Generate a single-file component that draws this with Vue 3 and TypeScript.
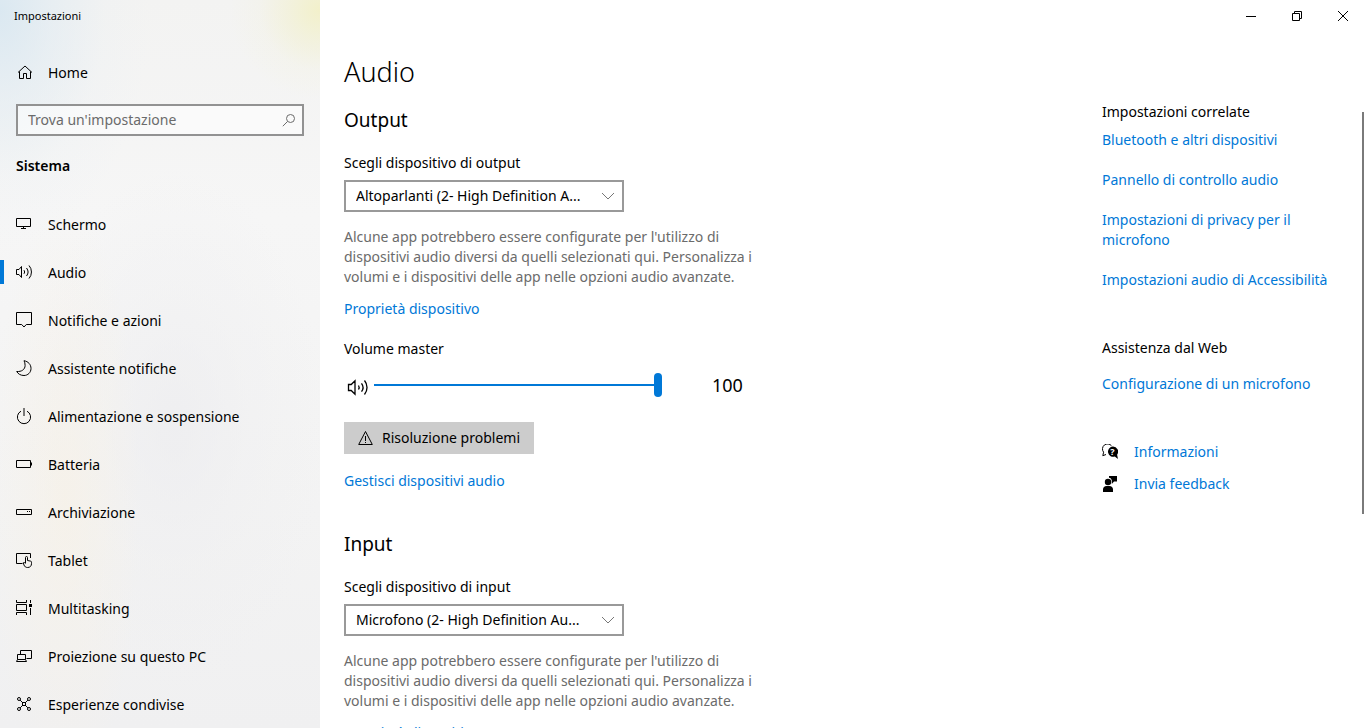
<script setup lang="ts">
import { ref } from 'vue'

interface NavItem {
  id: string
  label: string
  stroke: string
  fill?: string
}

interface DeviceSection {
  id: string
  title: string
  label: string
  device: string
}

const navItems: NavItem[] = [
  { id: 'schermo', label: 'Schermo', stroke: 'M.5 2.5h14v8H.5zM7.5 10.5v2M5 12.5h5' },
  {
    id: 'audio',
    label: 'Audio',
    stroke:
      'M.5 5.5H3l2.5-3v11l-2.5-3H.5zM8 6.2a3 3 0 0 1 0 3.6M10.5 4a6.4 6.4 0 0 1 0 8M13 1.5a9.8 9.8 0 0 1 0 13',
  },
  { id: 'notifiche', label: 'Notifiche e azioni', stroke: 'M.5.5h15v12H10.3L8 15l-2.3-2.500H.5z' },
  {
    id: 'assistente',
    label: 'Assistente notifiche',
    stroke:
      'M8 .7C12.400 1.500 15 4.600 15 8.500c0 4-3.200 7-7 7-3.300 0-5.900-1.500-7.300-4C5.500 11.900 9.100 9.500 9.100 5.500 9.100 3.500 8.700 2 8 .7z',
  },
  {
    id: 'alimentazione',
    label: 'Alimentazione e sospensione',
    stroke: 'M8 0v8M5 3.200a6.600 6.600 0 1 0 6 0',
  },
  { id: 'batteria', label: 'Batteria', stroke: 'M.5 4.500h14v7H.5zM15.500 6.500v3' },
  {
    id: 'archiviazione',
    label: 'Archiviazione',
    stroke: 'M.5 5.500h15v5H.5z',
    fill: 'M11 7h1v1h-1zM13 7h1v1h-1z',
  },
  {
    id: 'tablet',
    label: 'Tablet',
    stroke:
      'M6.500 11.500h-6v-10h14V6M9.500 11V5.500a1 1 0 0 1 2 0V8.500l3 .6c.7.1 1 .5 1 1.200v1.400c0 2.200-1.400 3.800-3.800 3.800-2 0-3.200-.9-3.700-2.500l-.8-2.200c.9-.5 1.800-.2 2.300.7',
  },
  {
    id: 'multitasking',
    label: 'Multitasking',
    stroke: 'M.5 0v2.500h10V0M.5 4.500h10v6H.5zM.5 15v-2.500h10V15M14.500 0v3M14.500 8v7',
    fill: 'M13 4h3v3h-3z',
  },
  {
    id: 'proiezione',
    label: 'Proiezione su questo PC',
    stroke: 'M4.500 6V2.500h11v8h-5M1.500 6.500h8v5h-8zM1.500 11.500l-1 2h10l-1-2',
  },
  {
    id: 'esperienze',
    label: 'Esperienze condivise',
    stroke:
      'M4.100 4.100l2.900 2.900M11.900 4.100L9 7M4.100 11.900L7 9M11.900 11.900L9 9M6.500 6.500h3v3h-3zM4.500 3a1.500 1.500 0 1 1-3 0 1.500 1.500 0 0 1 3 0zM14.500 3a1.500 1.500 0 1 1-3 0 1.500 1.500 0 0 1 3 0zM4.500 13a1.500 1.500 0 1 1-3 0 1.500 1.500 0 0 1 3 0zM14.500 13a1.500 1.500 0 1 1-3 0 1.500 1.500 0 0 1 3 0z',
  },
]

const outputSection: DeviceSection = {
  id: 'output',
  title: 'Output',
  label: 'Scegli dispositivo di output',
  device: 'Altoparlanti (2- High Definition A...',
}
const inputSection: DeviceSection = {
  id: 'input',
  title: 'Input',
  label: 'Scegli dispositivo di input',
  device: 'Microfono (2- High Definition Au...',
}
const sections = [outputSection, inputSection]

const relatedLinks = [
  'Bluetooth e altri dispositivi',
  'Pannello di controllo audio',
  'Impostazioni di privacy per il microfono',
  'Impostazioni audio di Accessibilità',
]

const active = ref('audio')
const search = ref('')
const volume = ref(100)
</script>

<template>
  <div class="window">
    <aside class="sidebar">
      <div class="app-title">Impostazioni</div>
      <a class="nav-link home" href="#home">
        <svg class="icon" viewBox="0 0 18 18" aria-hidden="true">
          <path class="line" d="M2 8.500 9 2l7 6.500M3.500 7.500v7h4v-5h3v5h4v-7" />
        </svg>
        <span>Home</span>
      </a>
      <div class="search">
        <input v-model="search" type="text" placeholder="Trova un'impostazione" aria-label="Trova un'impostazione" />
        <svg class="search-icon" viewBox="0 0 14 14" aria-hidden="true">
          <circle class="line" cx="8.500" cy="5.500" r="4" />
          <path class="line" d="M5.500 8.500.8 13.200" />
        </svg>
      </div>
      <h2 class="group">Sistema</h2>
      <nav>
        <a
          v-for="item in navItems"
          :key="item.id"
          class="nav-link"
          :class="{ active: item.id === active }"
          :href="'#' + item.id"
          @click.prevent="active = item.id"
        >
          <svg class="icon" viewBox="0 0 18 18" aria-hidden="true">
            <path class="line" :d="item.stroke" />
            <path v-if="item.fill" :d="item.fill" />
          </svg>
          <span>{{ item.label }}</span>
        </a>
      </nav>
    </aside>

    <main class="main">
      <div class="titlebar">
        <button type="button" aria-label="Riduci a icona">
          <svg viewBox="0 0 12 12"><path class="line" d="M1 6.500h10" /></svg>
        </button>
        <button type="button" aria-label="Ripristina">
          <svg viewBox="0 0 12 12"><path class="line" d="M1.500 3.500h7v7h-7zM3.500 3.500v-2h7v7h-2" /></svg>
        </button>
        <button type="button" aria-label="Chiudi">
          <svg viewBox="0 0 12 12"><path class="line" d="M1 1l10 10M11 1L1 11" /></svg>
        </button>
      </div>
      <h1>Audio</h1>
      <div class="body">
        <div class="settings">
          <section v-for="section in sections" :key="section.id" class="section">
            <h2>{{ section.title }}</h2>
            <label class="field-label" :for="'device-' + section.id">{{ section.label }}</label>
            <div class="select">
              <select :id="'device-' + section.id">
                <option>{{ section.device }}</option>
              </select>
              <svg viewBox="0 0 14 8" aria-hidden="true"><path class="line" d="M1 1l6 6 6-6" /></svg>
            </div>
            <p>
              Alcune app potrebbero essere configurate per l'utilizzo di dispositivi audio diversi da quelli
              selezionati qui. Personalizza i volumi e i dispositivi delle app nelle opzioni audio avanzate.
            </p>
            <a class="link" :href="'#proprieta-' + section.id">Proprietà dispositivo</a>
            <template v-if="section.id === 'output'">
              <label class="volume-label" for="volume">Volume master</label>
              <div class="volume">
                <svg class="speaker" viewBox="0 0 22 24" aria-hidden="true">
                  <path
                    class="line bold"
                    d="M1.500 11.500H4.200L8 7.700v13.600l-3.800-3.800H1.500zM11.500 12.500a3.600 3.600 0 0 1 0 4M14.500 10.300a7 7 0 0 1 0 8.400M17.500 7.500a11 11 0 0 1 0 14"
                  />
                </svg>
                <input id="volume" v-model.number="volume" type="range" min="0" max="100" />
                <output for="volume">{{ volume }}</output>
              </div>
              <button class="troubleshoot" type="button">
                <svg viewBox="0 0 16 16" aria-hidden="true">
                  <path class="line" d="M7.500 1.500 14.300 14.500H.7zM7.500 6v5M7.500 12v1" />
                </svg>
                <span>Risoluzione problemi</span>
              </button>
              <a class="link" href="#gestisci">Gestisci dispositivi audio</a>
            </template>
          </section>
        </div>

        <aside class="related">
          <h3>Impostazioni correlate</h3>
          <ul class="related-list">
            <li v-for="text in relatedLinks" :key="text"><a class="link" href="#correlate">{{ text }}</a></li>
          </ul>
          <h3 class="web">Assistenza dal Web</h3>
          <a class="link" href="#microfono">Configurazione di un microfono</a>
          <div class="help">
            <a class="link" href="#informazioni">
              <svg viewBox="0 0 16 16" aria-hidden="true">
                <path class="line" d="M9.500 1.800A4.700 4.700 0 0 0 1.600 8.200L.8 11.700 4 10.500" />
                <path
                  d="M10.500 2.500a5.200 5.200 0 1 0 2.300 10.100L16 15l-.9-4.200A5.200 5.200 0 0 0 10.500 2.500z"
                />
                <text x="10.500" y="11" text-anchor="middle">?</text>
              </svg>
              <span>Informazioni</span>
            </a>
            <a class="link" href="#feedback">
              <svg viewBox="0 0 16 16" aria-hidden="true">
                <circle cx="6" cy="6" r="3.200" />
                <path d="M1 16v-2.500C1 11.500 2.500 10 4.500 10h3c2 0 3.500 1.500 3.500 3.500V16zM7 0h8v5.500h-3L9.800 8V4.500C9.500 3 8.500 2 7 1.800z" />
              </svg>
              <span>Invia feedback</span>
            </a>
          </div>
        </aside>
        <div class="scroll-thumb" aria-hidden="true"></div>
      </div>
    </main>
  </div>
</template>

<style>
body {
  margin: 0;
  overflow: hidden;
}
</style>

<style scoped>
.window {
  display: grid;
  grid-template-columns: 320px 1fr;
  height: 100vh;
  overflow: hidden;
  background: #fff;
  color: #000;
  font-family: 'Noto Sans', 'Open Sans', sans-serif;
  font-size: 14px;
  line-height: 20px;
}

h1,
h2,
h3,
p,
ul {
  margin: 0;
  padding: 0;
  font-weight: 400;
}

h3 {
  font-size: 14px;
}

button,
input,
select {
  margin: 0;
  font: inherit;
  color: inherit;
}

a {
  color: inherit;
  text-decoration: none;
}

.line {
  fill: none;
  stroke: currentColor;
}

.bold {
  stroke-width: 1.3;
}

.sidebar {
  overflow: hidden;
  background:
    radial-gradient(circle at 320px 10px, rgba(242, 240, 198, 0.9) 0, rgba(242, 240, 206, 0.6) 30px, rgba(242, 240, 206, 0.15) 60px, rgba(242, 240, 206, 0) 90px),
    radial-gradient(ellipse 150px 240px at 0 10px, rgba(216, 231, 241, 0.9) 0, rgba(220, 233, 242, 0.5) 35%, rgba(224, 235, 243, 0.12) 70%, rgba(224, 235, 243, 0) 100%),
    radial-gradient(ellipse 75px 300px at 65px 500px, rgba(247, 241, 230, 0.7) 0, rgba(247, 241, 230, 0.4) 40%, rgba(247, 242, 232, 0) 100%),
    radial-gradient(ellipse 150px 260px at 175px 430px, rgba(236, 236, 239, 0.7) 0, rgba(238, 238, 240, 0.35) 50%, rgba(238, 238, 240, 0) 100%),
    linear-gradient(#f3f3f2, #f6f6f6 30%, #f3f3f3 70%, #f0f0f1);
}

.app-title {
  padding: 6px 14px;
  font-size: 11px;
}

.nav-link {
  display: flex;
  align-items: center;
  gap: 14px;
  height: 48px;
  padding-left: 16px;
}

.nav-link.active {
  background: linear-gradient(#0078d7, #0078d7) 0 11px / 4px 24px no-repeat;
}

.home {
  margin-top: 17px;
}

.icon {
  width: 18px;
  height: 18px;
}

.search {
  display: flex;
  align-items: center;
  box-sizing: border-box;
  height: 32px;
  margin: 7px 16px 0;
  padding: 0 6px 0 10px;
  border: 2px solid #929292;
  background: rgba(255, 255, 255, 0.5);
}

.search input {
  flex: 1;
  min-width: 0;
  padding: 0;
  border: 0;
  outline: 0;
  background: transparent;
}

.search input::placeholder {
  color: #6b6b6b;
  opacity: 1;
}

.search-icon {
  width: 14px;
  height: 14px;
  color: #6b6b6b;
}

.group {
  margin: 20px 16px 25px;
  font-size: 14px;
  font-weight: 600;
}

.main {
  display: flex;
  flex-direction: column;
  min-width: 0;
  min-height: 0;
}

.titlebar {
  display: flex;
  flex: none;
  justify-content: flex-end;
  height: 32px;
}

.titlebar button {
  display: grid;
  place-items: center;
  width: 46px;
  padding: 0;
  border: 0;
  background: none;
}

.titlebar svg {
  width: 12px;
  height: 12px;
}

h1 {
  flex: none;
  margin: 20px 24px 0;
  font-size: 27px;
  font-weight: 300;
  line-height: 40px;
}

.body {
  display: flex;
  flex: 1;
  min-height: 0;
  overflow: hidden;
  padding: 10px 2px 0 24px;
}

.settings {
  flex: 1;
}

.section {
  display: flex;
  flex-direction: column;
  align-items: flex-start;
  margin-bottom: 35px;
}

.section h2 {
  padding-top: 4px;
  margin-bottom: 19px;
  font-size: 19px;
  line-height: 28px;
}

.select {
  display: grid;
  align-items: center;
  width: 280px;
  margin: 7px 0 15px;
}

.select select {
  grid-area: 1 / 1;
  width: 100%;
  height: 32px;
  padding: 0 10px;
  border: 2px solid #999;
  border-radius: 0;
  appearance: none;
  background: #fff;
}

.select svg {
  grid-area: 1 / 1;
  justify-self: end;
  width: 14px;
  height: 8px;
  margin-right: 9px;
  color: #777;
  pointer-events: none;
}

p {
  max-width: 416px;
  margin-bottom: 12px;
  color: #6b6b6b;
}

.link {
  color: #0078d7;
}

.volume-label {
  margin-top: 20px;
}

.volume {
  display: flex;
  align-items: center;
  height: 24px;
  margin: 14px 0 25px;
}

.speaker {
  width: 22px;
  height: 24px;
  margin: 0 5px 0 3px;
}

.volume input {
  width: 288px;
  height: 24px;
  appearance: none;
  background: linear-gradient(#0078d7, #0078d7) 0 50% / 100% 2px no-repeat;
}

.volume input::-webkit-slider-thumb {
  width: 8px;
  height: 24px;
  border-radius: 4px;
  appearance: none;
  background: #0078d7;
}

.volume output {
  margin-left: 50px;
  font-size: 18px;
  line-height: 24px;
}

.troubleshoot {
  display: flex;
  align-items: center;
  gap: 8px;
  height: 32px;
  margin-bottom: 17px;
  padding: 0 14px;
  border: 0;
  background: #ccc;
}

.troubleshoot svg {
  width: 16px;
  height: 16px;
}

.related {
  flex: none;
  width: 236px;
  margin-right: 24px;
}

.related-list {
  margin: 8px 0 48px;
  list-style: none;
}

.related-list li + li {
  margin-top: 20px;
}

.web {
  margin-bottom: 16px;
}

.help {
  display: grid;
  gap: 12px;
  margin-top: 48px;
}

.help a {
  display: flex;
  align-items: center;
  gap: 16px;
}

.help svg {
  width: 16px;
  height: 16px;
  color: #000;
  fill: #000;
}

.help text {
  fill: #fff;
  font-size: 9px;
  font-weight: 700;
}

.scroll-thumb {
  width: 2px;
  height: 402px;
  margin-top: 10px;
  background: #7a7a7a;
}
</style>
